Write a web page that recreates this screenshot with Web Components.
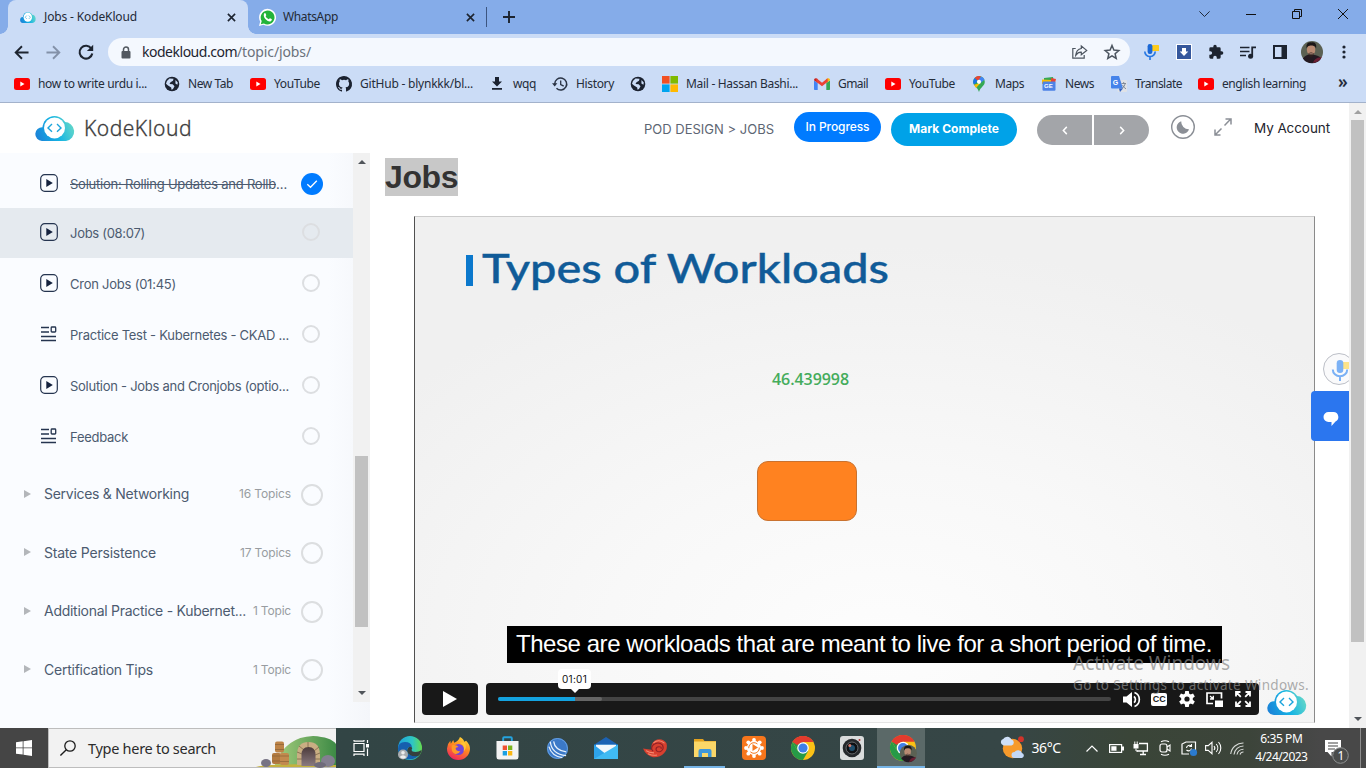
<!DOCTYPE html>
<html lang="en">
<head>
<meta charset="utf-8">
<title>Jobs - KodeKloud</title>
<style>
html,body{margin:0;height:100%;overflow:hidden;background:#fff}
</style>
</head>
<body>
<desk-top></desk-top>
<script>
const define = (name, css, html, after) => customElements.define(name, class extends HTMLElement {
  connectedCallback() {
    if (this.shadowRoot) return;
    const root = this.attachShadow({mode: 'open'});
    root.innerHTML = '<style>*{box-sizing:border-box}' + css + '</style>' + (typeof html === 'function' ? html(this) : html);
    if (after) after(this, root);
  }
});

/* A one-line label that spreads its letters (or its glyph width, with "stretch") over a given width. */
define('ui-label', ':host{display:inline-block;white-space:nowrap;flex:none}span{display:inline-block;white-space:pre;transform-origin:0 50%}',
  '<span><slot></slot></span>', (el, root) => {
    const w = parseFloat(el.getAttribute('w')), s = root.querySelector('span');
    if (!w) return;
    const n = el.textContent.length, nat = s.getBoundingClientRect().width;
    el.style.width = w + 'px';
    if (el.hasAttribute('stretch')) s.style.transform = 'scaleX(' + w / nat + ')';
    else s.style.letterSpacing = (w - nat) / n + 'px';
  });

const chromeWheel = `<circle cx="12" cy="12" r="12" fill="#fbc116"/><path d="M12 12L1.6 6A12 12 0 0 1 22.4 6H12z" fill="#e33b2e"/><path d="M12 12L6.8 15 1.6 6A12 12 0 0 0 12 24l5.2-9z" fill="#269a47"/><path d="M1.6 6L6.8 15 12 6z" fill="#269a47"/><path d="M1.6 6A12 12 0 0 1 22.4 6H12L6 9z" fill="#e33b2e"/><circle cx="12" cy="12" r="5.8" fill="#fff"/><circle cx="12" cy="12" r="4.6" fill="#3f7fe8"/>`;
const face = `<circle cx="12" cy="12" r="12" fill="#5b6153"/><path d="M2 19q4-5 10-4 7 0 10 4a12 12 0 0 1-20 0z" fill="#241a22"/><path d="M13 24q2-6 8-6l2-1a12 12 0 0 1-10 7z" fill="#6b1f33"/><ellipse cx="11" cy="9.5" rx="4.6" ry="6.2" fill="#b98a72"/><path d="M6 8Q5 1 11.500 1.500 17.500 1 16.500 8 15 4 11 5 7.500 4.500 6 8z" fill="#1b1718"/><path d="M8 13.500q3-2 6 0-1 4.500-3 4.500t-3-4.500z" fill="#2b1f1d"/><path d="M9 14h4" stroke="#c79c8a" stroke-width="1"/>`;
const cloud = `<defs><linearGradient id="g" gradientUnits="userSpaceOnUse" x1="2" y1="22" x2="38" y2="7"><stop offset="0" stop-color="#1c83d8"/><stop offset=".5" stop-color="#14b3e4"/><stop offset="1" stop-color="#66d8c8"/></linearGradient></defs><path d="M6.900 25A6.900 6.900 0 0 1 7.500 11.200h1a11.500 11.500 0 0 1 20.800-5.100A9.500 9.500 0 0 1 31 25z" fill="url(#g)"/><circle cx="19.500" cy="11.900" r="12" fill="url(#g)"/><circle cx="19.500" cy="11.900" r="10.500" fill="#fff"/><path d="M17 8l-4 3.900 4 3.900M22 8l4 3.900-4 3.900" fill="none" stroke="#1ba4dc" stroke-width="1.400"/>`;
const ICONS = {
  cloud: ['40 25', cloud],
  youtube: ['16 12', '<rect width="16" height="12" rx="2.500" fill="#f00"/><path d="M6.300 3.500v5L10.500 6z" fill="#fff"/>'],
  whatsapp: ['24 24', '<path d="M0 24l1.700-6.200A12 12 0 1 1 6.300 22.300z" fill="#fff"/><path d="M2.600 21.500l1.200-4.400A9.800 9.800 0 1 1 7 20.300z" fill="#23b33a"/><path d="M7.400 6.200c1-1 1.700-.6 2.100.4l.7 1.700c.3.700-1 1.500-.8 2 .8 1.800 2.300 3.200 4.200 4 .6.200 1.300-1.500 2-1.200l2.200 1.100c1 .5-.2 2.900-1.800 3.300C11.800 18.400 4.400 10.800 7.400 6.200z" fill="#fff"/>'],
  x: ['10 10', '<path d="M1 1l8 8M9 1L1 9" stroke="#1d2430" stroke-width="1.800"/>'],
  plus: ['12 12', '<path d="M6 0v12M0 6h12" stroke="#1d2430" stroke-width="1.900"/>'],
  back: ['16 16', '<path d="M15.500 8H2M8.500 1.300L1.800 8l6.700 6.700" fill="none" stroke="#1d2430" stroke-width="2"/>'],
  fwd: ['16 16', '<path d="M.5 8H14M7.500 1.300L14.200 8l-6.700 6.700" fill="none" stroke="#8391a8" stroke-width="2"/>'],
  reload: ['16 16', '<path d="M13.400 4.700A6.400 6.400 0 1 0 14.300 9.500" fill="none" stroke="#1d2430" stroke-width="2.100"/><path d="M15.200.8v6.300H8.900z" fill="#1d2430"/>'],
  lock: ['10 13', '<path d="M2.500 6V3.600a2.500 2.500 0 0 1 5 0V6" fill="none" stroke="#525860" stroke-width="1.500"/><rect x=".5" y="5" width="9" height="7.500" rx="1" fill="#525860"/>'],
  share: ['16 14', '<path d="M3.700 3.500H.8v9.700h11.400V10" fill="none" stroke="#4c5560" stroke-width="1.200"/><path d="M9.300 1l5.400 4.400-5.400 4.300V7.200Q6 7 3.700 10.300 4.300 4.200 9.300 3.500z" fill="none" stroke="#4c5560" stroke-width="1.200"/>'],
  star: ['16 16', '<path d="M8 1.500l1.900 4.600 4.900.4-3.700 3.200 1.100 4.800L8 11.900l-4.200 2.600 1.100-4.800L1.200 6.500l4.900-.4z" fill="none" stroke="#4c5560" stroke-width="1.500"/>'],
  mic: ['15 16', '<rect x="8" y="1" width="7" height="6" rx=".6" fill="#fdcb1b"/><rect x="3.600" y="0" width="4.800" height="10" rx="2.200" fill="#1a68d6"/><path d="M.8 7.500a5.200 5 0 0 0 10.400 0M6 12.500V16" fill="none" stroke="#2a7ae4" stroke-width="1.700"/>'],
  saver: ['16 16', '<rect width="16" height="16" fill="#fff"/><rect x="1" y="1" width="14" height="14" fill="#35579c"/><path d="M6 4h4v3.500h2.300L8 12 3.700 7.500H6z" fill="#fff"/>'],
  puzzle: ['24 24', '<path d="M20.500 11H19V7a2 2 0 0 0-2-2h-4V3.500a2.500 2.500 0 0 0-5 0V5H4a2 2 0 0 0-2 2v3.800h1.500a2.700 2.700 0 0 1 0 5.400H2V20c0 1.100.9 2 2 2h3.800v-1.500a2.700 2.700 0 0 1 5.400 0V22H17a2 2 0 0 0 2-2v-4h1.500a2.500 2.500 0 0 0 0-5z" fill="#1d2430"/>'],
  queue: ['16 13', '<path d="M0 1.500h9.500M0 5.500h9.500M0 9.500h6" stroke="#1d2430" stroke-width="1.700"/><circle cx="10.600" cy="10.200" r="2.500" fill="#1d2430"/><path d="M12.200 10V1.300H16" fill="none" stroke="#1d2430" stroke-width="1.800"/>'],
  panel: ['14 14', '<path d="M0 0h14v14H0zM2 2v10h6.500V2z" fill="#1d2430" fill-rule="evenodd"/>'],
  face: ['24 24', face],
  dots: ['4 14', '<circle cx="2" cy="2" r="1.600" fill="#1d2430"/><circle cx="2" cy="7" r="1.600" fill="#1d2430"/><circle cx="2" cy="12" r="1.600" fill="#1d2430"/>'],
  globe: ['16 16', '<circle cx="8" cy="8" r="7.300" fill="#1b2230"/><path d="M5.500 2.500l4 .3-.5 2-2.500 1.500-1 1.700 3.200.3 1.800 1.900-1.500 2.800-1.500.8-.3-2.400L4 9.500 2 7.800Q2.500 4.500 5.500 2.500zM11.500 4l2.300 2.500-.4 2.200-2-1.200z" fill="#cbdcf6"/>'],
  github: ['16 16', '<path d="M8 0C3.580 0 0 3.580 0 8c0 3.540 2.290 6.530 5.470 7.590.4.070.55-.17.55-.38v-1.490c-2.010.37-2.530-.49-2.690-.94-.09-.23-.48-.94-.82-1.130-.28-.15-.68-.52-.01-.53.63-.01 1.080.58 1.230.82.72 1.210 1.870.87 2.330.66.070-.52.28-.87.51-1.070-1.780-.2-3.640-.89-3.640-3.950 0-.87.31-1.590.82-2.150-.08-.2-.36-1.020.08-2.120 0 0 .67-.21 2.200.82a7.600 7.600 0 0 1 4 0c1.530-1.040 2.200-.82 2.200-.82.44 1.100.16 1.920.08 2.120.51.56.82 1.270.82 2.150 0 3.070-1.870 3.750-3.650 3.950.29.25.54.73.54 1.480v2.200c0 .21.15.46.55.38A8 8 0 0 0 8 0z" fill="#1b2230"/>'],
  down: ['12 13', '<path d="M4 0h4v4.500h3L6 9.500 1 4.500h3zM1 11h10v1.800H1z" fill="#1b2230"/>'],
  history: ['16 14', '<path d="M2.700 7a6 6 0 1 1 1.800 4.300" fill="none" stroke="#2a3344" stroke-width="1.500"/><path d="M0 6.300h5.400L2.700 9.400z" fill="#2a3344"/><path d="M8.700 3.500v4l3 1.600" fill="none" stroke="#2a3344" stroke-width="1.300"/>'],
  ms: ['16 16', '<path d="M0 0h7.600v7.600H0z" fill="#f25022"/><path d="M8.400 0H16v7.600H8.400z" fill="#7fba00"/><path d="M0 8.400h7.600V16H0z" fill="#00a4ef"/><path d="M8.400 8.400H16V16H8.400z" fill="#ffb900"/>'],
  gmail: ['16 12', '<path d="M0 2.500v8.500c0 .6.400 1 1 1h2.700V5z" fill="#4285f4"/><path d="M16 2.500v8.500c0 .6-.4 1-1 1h-2.700V5z" fill="#34a853"/><path d="M12.300 5V1L14 .2C15 0 16 .8 16 2.200z" fill="#fbbc04"/><path d="M3.700 5V1L2 .2C1 0 0 .8 0 2.200z" fill="#c5221f"/><path d="M2.500.3L8 4.700 13.500.3l.3 3.500L8 8.300 2.200 3.800z" fill="#ea4335"/>'],
  maps: ['12 16', '<path d="M6 0a5.800 5.800 0 0 1 5.800 5.800C11.800 10 7.500 11 6 16 4.500 11 .2 10 .2 5.800A5.800 5.800 0 0 1 6 0z" fill="#34a853"/><path d="M6 5.800L1.600 2A5.800 5.800 0 0 1 8 .4z" fill="#ea4335"/><path d="M1.600 2L5 5 1 8.700A6 6 0 0 1 1.600 2z" fill="#1a73e8"/><path d="M8 .4a5.800 5.800 0 0 1 3.500 3.300L7.500 7 5 5z" fill="#4285f4"/><path d="M1 8.700L7.500 7 3 12z" fill="#fbbc04"/><circle cx="6" cy="5.800" r="2.100" fill="#fff"/>'],
  news: ['16 14', '<path d="M3 1l9-1 1 5H3z" fill="#34a853"/><path d="M10 1l5 1-1 4h-4z" fill="#ea4335"/><path d="M1 2.500l9 .5v4H1z" fill="#fbbc04"/><rect x="1.500" y="4.500" width="13" height="9.300" rx="1" fill="#4f83e6"/><text x="3" y="11.400" font-family="Liberation Sans" font-size="6" font-weight="700" fill="#fff">GE</text>'],
  translate: ['16 16', '<rect x="6.500" y="4" width="9.500" height="12" rx="1" fill="#dfe2e7"/><path d="M0 1q0-1 1-1h7l4 12.500H1q-1 0-1-1z" fill="#4583ea"/><path d="M8 12.500h4L9 16z" fill="#2f5fc0"/><text x="1.800" y="8.800" font-family="Liberation Sans" font-size="7" font-weight="700" fill="#fff">G</text><path d="M10.500 7.500h4.500M12.700 6v1.500M14.300 7.500q-1 4-3.500 5M11.500 9q1.500 3 3.500 3.800" fill="none" stroke="#7b8492" stroke-width=".9"/>'],
  moon: ['24 24', '<circle cx="12" cy="12" r="11.300" fill="none" stroke="#8b8f96" stroke-width="1.400"/><path d="M10.200 6.300A6.300 6.300 0 1 0 18 14.200 7.500 7.500 0 0 1 10.200 6.300z" fill="#8b8f96"/>'],
  expand: ['18 18', '<path d="M10.500 7.500L16.500 1.300M7.500 10.500L1.300 16.700M11.500 1H17v5.500M1 11.500V17h5.500" fill="none" stroke="#8b8f96" stroke-width="1.500"/>'],
  lt: ['6 8', '<path d="M4.800.8L1.400 4l3.400 3.200" fill="none" stroke="#fff" stroke-width="1.500"/>'],
  gt: ['6 8', '<path d="M1.200.8L4.600 4 1.200 7.200" fill="none" stroke="#fff" stroke-width="1.500"/>'],
  video: ['18 18', '<rect x=".7" y=".7" width="16.600" height="16.600" rx="4" fill="none" stroke="#25344f" stroke-width="1.200"/><path d="M6.300 5l6.500 4-6.500 4z" fill="#14213d"/>'],
  text: ['16 16', '<path d="M0 1.500h8M0 6h8M0 10.500h15M0 14.500h15" stroke="#25344f" stroke-width="1.300"/><rect x="10.200" y="1" width="4.500" height="5" rx=".8" fill="none" stroke="#25344f" stroke-width="1.300"/>'],
  tri: ['7 8', '<path d="M0 0l7 4-7 4z" fill="#b3b6ba"/>'],
  check: ['22 22', '<circle cx="11" cy="11" r="11" fill="#007bff"/><path d="M6.300 11.300l3.200 3 6.300-6.600" fill="none" stroke="#fff" stroke-width="1.300"/>'],
  up: ['8 4', '<path d="M0 4h8L4 0z" fill="#50555a"/>'], upl: ['8 4', '<path d="M0 4h8L4 0z" fill="#a0a0a0"/>'],
  dn: ['8 4', '<path d="M0 0h8L4 4z" fill="#50555a"/>'],
  play: ['14 16', '<path d="M0 0l14 8-14 8z" fill="#fff"/>'],
  vol: ['17 17', '<path d="M0 5.500h3.500L9 1v15l-5.500-4.500H0z" fill="#fff"/><path d="M11 5.300a4.300 4.300 0 0 1 0 6.400M11.500 1.500a7.500 7.500 0 0 1 0 14" fill="none" stroke="#fff" stroke-width="1.700"/>'],
  gear: ['16 16', '<g fill="#fff"><circle cx="8" cy="8" r="5.800"/><path d="M6.200 0h3.600l.6 4H5.600zM6.200 16h3.600l.6-4H5.600z"/><path transform="rotate(60 8 8)" d="M6.200 0h3.600l.6 4H5.600zM6.200 16h3.600l.6-4H5.600z"/><path transform="rotate(120 8 8)" d="M6.200 0h3.600l.6 4H5.600zM6.200 16h3.600l.6-4H5.600z"/></g><circle cx="8" cy="8" r="2.600" fill="#181818"/>'],
  pip: ['17 15', '<path d="M7 11.500H1V1h14.500v5.500" fill="none" stroke="#fff" stroke-width="1.700"/><rect x="9" y="8.500" width="8" height="6.500" fill="#fff"/><path d="M4 4l3 2.700M7.300 3.700V7H4" fill="none" stroke="#fff" stroke-width="1.300"/>'],
  full: ['16 16', '<path d="M1 5.500V1h4.500M1 1l4.800 4.800M10.500 1H15v4.500M15 1l-4.800 4.800M1 10.500V15h4.500M1 15l4.800-4.800M10.500 15H15v-4.500M15 15l-4.800-4.800" fill="none" stroke="#fff" stroke-width="1.800"/>'],
  micbig: ['32 32', '<circle cx="16" cy="16" r="15.500" fill="#fafafb" stroke="#b9bcc4"/><rect x="20" y="9" width="9" height="7" fill="#fde283"/><rect x="13.700" y="7" width="6.600" height="13" rx="3.300" fill="#74adf5"/><path d="M9.800 16.500a7.200 6.800 0 0 0 14.400 0M17 23.300V28" fill="none" stroke="#74adf5" stroke-width="2"/>'],
  chat: ['16 14', '<path d="M5.500 0h5a5 5 0 0 1 2 9.500L8.500 14V10h-3a5 5 0 0 1 0-10z" fill="#fff"/>'],
  winmin: ['10 10', '<path d="M0 5.500h10" stroke="#111"/>'],
  winmax: ['10 10', '<path d="M.5 2.500h7v7h-7zM2.500 2.500v-2h7v7h-2" fill="none" stroke="#111"/>'],
  winx: ['10 10', '<path d="M0 0l10 10M10 0L0 10" stroke="#111"/>'],
  chev: ['11 6', '<path d="M.4.400l5.100 5.100L10.600.4" fill="none" stroke="#222b3a"/>'],
  win: ['16 16', '<path d="M0 2.300L6.700 1.300V7.500H0zM7.500 1.200L16 0v7.500H7.500zM0 8.300h6.700v6.300L0 13.700zM7.500 8.300H16V16l-8.500-1.200z" fill="#fff"/>'],
  search: ['16 16', '<circle cx="10" cy="6" r="5.200" fill="none" stroke="#1c1c1c" stroke-width="1.300"/><path d="M6.300 9.800L.4 15.600" stroke="#1c1c1c" stroke-width="1.400"/>'],
  scene: ['80 32', '<defs><linearGradient id="h" x1="0" x2="1"><stop offset="0" stop-color="#a8cf7e"/><stop offset="1" stop-color="#3d8a45"/></linearGradient><linearGradient id="d" x1="0" y1="0" x2="0" y2="1"><stop offset="0" stop-color="#4b3a3a"/><stop offset="1" stop-color="#8a7a80"/></linearGradient></defs><path d="M18 32Q28 2 57 1 75 2 80 9V32z" fill="url(#h)"/><path d="M0 32q15-4 80-2v2z" fill="#c4b13e"/><path d="M41 30V20Q41 7 52.500 7T64 20v10z" fill="#c9ae83"/><path d="M41 17l5 2M43 11l5 4M52 7v5M63 12l-5 4M64 18l-5 2M41 24h5M59 24h5" stroke="#7c6448" stroke-width=".8"/><path d="M45.500 31V20q0-8 7-8t7 8v11z" fill="url(#d)"/><rect x="19" y="6.500" width="9" height="11" rx="2" fill="#bd8347"/><rect x="16" y="18" width="9" height="11" rx="2" fill="#b37a40"/><rect x="24" y="18" width="9" height="12" rx="2" fill="#c28a4e"/><path d="M19 9.500h9M19 14.500h9M16 21h8M24 21h9M16 26h8M24 26.500h9" stroke="#8a6238" stroke-width=".7"/><ellipse cx="10" cy="28" rx="5" ry="4" fill="#777384"/><ellipse cx="72" cy="26" rx="7" ry="6" fill="#837f90"/><ellipse cx="64" cy="30" rx="6" ry="3" fill="#6f6b7b"/>'],
  task: ['16 16', '<path d="M1 3.500h10v8H1zM1 1.500V0M11 1.500V0M1 1.200h10M1 14.200h10M1 13.500V16M11 13.500V16" fill="none" stroke="#fff" stroke-width="1.200"/><path d="M14.500 0v3M14.500 8.500V16" stroke="#fff" stroke-width="1.200"/><path d="M13 4h3v3.500h-3z" fill="#fff"/>'],
  edge: ['24 24', '<defs><linearGradient id="e" x1="0" y1=".3" x2="1" y2=".3"><stop offset="0" stop-color="#1ea3dd"/><stop offset=".6" stop-color="#2ec6c4"/><stop offset="1" stop-color="#64dc4f"/></linearGradient></defs><circle cx="12" cy="12" r="12" fill="url(#e)"/><path d="M0 13Q0 6 7 6q6 0 7 5-4-1-5 3-1 7 12 5a12 12 0 0 1-21-6z" fill="#165fae"/><path d="M10 12q2-2 4-.5.600 1-.4 2.300 0 2.200 4 2.200 3 0 6-2-1 5-3.500 6-9 1-10.800-4-.7-2 .7-4z" fill="#35403f"/><circle cx="5" cy="18.500" r="5" fill="#a9adb0"/><circle cx="5" cy="16.800" r="1.800" fill="#eee"/><path d="M1.700 21q3.300-3.500 6.600 0-3 3.500-6.600 0z" fill="#eee"/>'],
  firefox: ['24 24', '<defs><linearGradient id="f" x1=".8" y1="0" x2=".3" y2="1"><stop offset="0" stop-color="#ffe03b"/><stop offset=".45" stop-color="#ff8a1f"/><stop offset="1" stop-color="#f0245f"/></linearGradient></defs><path d="M12 24A11.700 11.700 0 0 1 0 12Q.3 7 3.500 4l.5 3 2.500-4 1 3Q12 4.500 13.500 0q4 2 4.500 5l2-1q4 4 4 8.500A12 12 0 0 1 12 24z" fill="url(#f)"/><circle cx="12" cy="13" r="5.800" fill="#7145d8"/><path d="M5 8.500q5-1 7 2-3 0-3 2 1 3 5 2-2 4-6 3-4-2-3-9z" fill="#ff9a25"/><path d="M13 6q6 2 4.500 9 4-4 1-9.500z" fill="#ffc634"/>'],
  store: ['24 24', '<path d="M7.500 6V2.200q0-1 1-1h7q1 0 1 1V6" fill="none" stroke="#25a3de" stroke-width="2"/><path d="M0.500 5h23v16q0 2.500-2.500 2.500H3q-2.500 0-2.500-2.500z" fill="#f3f3f3"/><path d="M7 9.500h4.500V14H7z" fill="#ef5130"/><path d="M12.500 9.500H17V14h-4.500z" fill="#7ab41d"/><path d="M7 15h4.500v4.500H7z" fill="#1aa0e3"/><path d="M12.500 15H17v4.500h-4.500z" fill="#fbb713"/>'],
  swirl: ['24 24', '<circle cx="12" cy="12" r="11" fill="#3b79c8"/><circle cx="12" cy="12" r="10.400" fill="none" stroke="#6aa4e5"/><path d="M4.500 5q1.500 13 16.500 14.500M8 4.500Q9 13.500 21 15.500M3 10q3 10 14 11.500" fill="none" stroke="#e8f2fc" stroke-width="1.300"/>'],
  mail: ['24 24', '<path d="M0 8L12 0l12 8v2H0z" fill="#1c62b3"/><path d="M0 8h24v15H0z" fill="#1e90dd"/><path d="M2 8h20v5l-10 5L2 13z" fill="#f2f7fb"/><path d="M0 8l12 10 12-10v15H0z" fill="#2ea3ea"/><path d="M24 8L0 23h24z" fill="#40baf3"/>'],
  shell: ['24 24', '<path d="M0 12q5 1 9 1.500-2-6 2.500-10.500Q19-1 23.500 6q1.500 7-2.500 11.500-4 5-11 4.500-7-2-10-10z" fill="#d8402f"/><path d="M10 15q-3-3.500.5-7.500 5-4 9 .500 2 5-2 7.500-4 1-4.500-2.500 0-3 3-3t2 2.500" fill="none" stroke="#8f1f25" stroke-width="1.100"/><path d="M10.500 5.500Q16 .5 21.500 6M3 14.500q3 2.500 8 2.500M5 18q5 2.500 9 1.500" fill="none" stroke="#f58b72" stroke-width="1.200"/>'],
  folder: ['22 20', '<path d="M0 1h9l1.500 2H22v4H0z" fill="#e4a21e"/><path d="M0 3.500h22V19H0z" fill="#fbd768"/><path d="M4.500 19v-6q0-2 2-2h9q2 0 2 2v6H14v-4H8v4z" fill="#3f97d9"/>'],
  sun: ['24 24', '<rect width="24" height="24" rx="4" fill="#f7761c"/><g fill="#fff"><circle cx="12" cy="12" r="7.200"/><circle cx="12" cy="4" r="1.900"/><circle cx="12" cy="20" r="1.900"/><circle cx="4" cy="12" r="1.900"/><circle cx="20" cy="12" r="1.900"/><circle cx="6.300" cy="6.300" r="1.900"/><circle cx="17.700" cy="6.300" r="1.900"/><circle cx="6.300" cy="17.700" r="1.900"/><circle cx="17.700" cy="17.700" r="1.900"/></g><path d="M10.500 8l5.500 3.500-5.500 3.500z" fill="#f47a22"/><circle cx="12" cy="12" r="5.300" fill="none" stroke="#f47a22" stroke-dasharray="12 4"/>'],
  chrome: ['24 24', chromeWheel],
  chromeme: ['24 24', chromeWheel + '<g transform="translate(9 9) scale(.66)">' + face + '</g>'],
  camera: ['24 24', '<rect width="24" height="24" rx="3" fill="#dadcdc"/><circle cx="12" cy="12" r="9.300" fill="#25282b"/><circle cx="12" cy="12" r="6" fill="#0e1013" stroke="#67696c"/><circle cx="12" cy="12" r="3" fill="#1f4d6b"/><circle cx="9.800" cy="9.600" r="1.500" fill="#d77b6d"/><circle cx="19.500" cy="4" r="1" fill="#b03030"/>'],
  weather: ['24 24', '<circle cx="12.500" cy="12.500" r="9.700" fill="#f79a2b"/><path d="M3.500 9.500a3.500 3.500 0 0 1 0-6.800 4.700 4.700 0 0 1 8 .8 3.100 3.100 0 0 1 0 6z" fill="#cfe0f8"/><path d="M14.500 22a3 3 0 0 1 0-6 4.300 4.300 0 0 1 7.500 1 2.600 2.600 0 0 1 0 5z" fill="#c3d8f7"/><circle cx="21" cy="3.200" r="2.900" fill="#d1342a"/>'],
  tup: ['12 7', '<path d="M.5 6.500L6 1l5.500 5.500" fill="none" stroke="#fff" stroke-width="1.200"/>'],
  batt: ['15 9', '<rect x=".6" y=".6" width="12" height="7.800" fill="none" stroke="#fff" stroke-width="1.200"/><path d="M13 2.500h2v4h-2zM2.300 2.300h5.200v4.400H2.300z" fill="#fff"/>'],
  net: ['16 15', '<path d="M6 2.500h8.400v7.500H4M7 13.500h6M10.200 10v3.500" fill="none" stroke="#fff" stroke-width="1.300"/><rect x=".5" y="3" width="5" height="4.500" fill="#fff"/><path d="M1.800 3V.5M4.200 3V.5M3 7.500V10h2" stroke="#fff" stroke-width="1" fill="none"/>'],
  meet: ['12 16', '<rect x="1" y="4" width="7" height="8" rx="2" fill="none" stroke="#fff" stroke-width="1.200"/><path d="M8 7l3-2v6L8 9M2 1.700Q6-.3 10 1.700M2 14.300Q6 16.300 10 14.300" fill="none" stroke="#fff" stroke-width="1.100"/>'],
  cast: ['16 16', '<path d="M1 13V4l4-2h9.500v10M1 4v10h7" fill="none" stroke="#fff" stroke-width="1.200"/><path d="M5.500 8a3 3 0 0 1 5-2M10.500 8.500a3 3 0 0 1-5 1.500M10.500 4v2.500H8.300" fill="none" stroke="#fff" stroke-width="1.100"/><circle cx="12.500" cy="12.500" r="3.600" fill="#2b7bd0"/>'],
  spk: ['17 14', '<path d="M.6 4.600h2.600L7 1.300v11.400L3.200 9.400H.6z" fill="none" stroke="#fff" stroke-width="1.100"/><path d="M9 5a3 3 0 0 1 0 4M11.200 3a6 6 0 0 1 0 8M13.500 1a9 9 0 0 1 0 12" fill="none" stroke="#fff" stroke-width="1.100"/>'],
  wifi: ['14 14', '<path d="M.7 13A12.500 12.500 0 0 1 13.500 2M4 13.500A9.500 9.500 0 0 1 13.500 5M7 13.500a6.500 6.500 0 0 1 6.500-5.300M10 13.500a3.500 3.500 0 0 1 3.500-2.500" fill="none" stroke="#d9dcd9" stroke-width="1.100"/>'],
  note: ['24 25', '<path d="M0 1h16v12H6.500v4.500L2.500 13H0z" fill="#fff"/><path d="M3 4h10M3 7h10M3 10h7" stroke="#444" stroke-width="1.200"/><circle cx="15.500" cy="16.500" r="7.800" fill="#4a4c4c" stroke="#8f9191"/><text x="12.600" y="21" font-family="Noto Sans" font-size="12" fill="#fff">1</text>']
};
define('ui-icon', ':host{display:inline-block;flex:none;line-height:0}svg{display:block;width:100%;height:100%;overflow:visible}', el => {
  const [box, art] = ICONS[el.getAttribute('name')];
  const [bw, bh] = box.split(' ');
  el.style.width = (el.getAttribute('w') || bw) + 'px';
  el.style.height = (el.getAttribute('h') || bh) + 'px';
  return `<svg viewBox="0 0 ${box}" preserveAspectRatio="none">${art}</svg>`;
});

define('scroll-bar', ':host{display:flex;flex-direction:column;align-items:center;width:17px;flex:none;background:#f1f1f1}.b{height:17px;display:flex;align-items:center}.t{width:13px;background:#c1c1c1}.f{flex:1}',
  el => `<div class="b"><ui-icon name="${el.getAttribute('top') || 'up'}"></ui-icon></div><div style="height:${el.getAttribute('before')}px"></div><div class="t" style="height:${el.getAttribute('thumb')}px"></div><div class="f"></div><div class="b"><ui-icon name="dn" style="margin-bottom:2px"></ui-icon></div>`);

/* Browser frame */
define('tab-strip', `:host{display:flex;height:34px;background:#85ace9;font:12px/16px "Noto Sans",sans-serif;color:#232a36;align-items:stretch}
.tab{display:flex;align-items:center;position:relative}
.on{background:#cbdcf6;border-radius:8px 8px 0 0;width:240px;margin-left:8px;padding-left:12px}
.on:before,.on:after{content:"";position:absolute;bottom:0;width:8px;height:8px}
.on:before{left:-8px;background:radial-gradient(circle at 0 0,transparent 7.500px,#cbdcf6 8px)}
.on:after{right:-8px;background:radial-gradient(circle at 100% 0,transparent 7.500px,#cbdcf6 8px)}
.sep{width:1px;height:20px;background:#3c5580;margin:7px 0 0 10px}
.win{margin-left:auto;display:flex;align-items:center;padding:0 18px 6px 0;gap:36px}`,
`<div class="tab on"><ui-icon name="cloud" w="16" h="11"></ui-icon><ui-label w="93" style="margin-left:8px">Jobs - KodeKloud</ui-label><ui-icon name="x" w="9" h="9" style="margin-left:90px"></ui-icon></div>
<div class="tab"><ui-icon name="whatsapp" w="17" h="17" style="margin-left:11px"></ui-icon><ui-label w="55" style="margin-left:7px">WhatsApp</ui-label><ui-icon name="x" w="9" h="9" style="margin-left:128px"></ui-icon></div>
<div class="sep" style="margin-left:11px"></div><ui-icon name="plus" style="margin:11px 0 0 16px"></ui-icon>
<div class="win"><ui-icon name="chev"></ui-icon><ui-icon name="winmin"></ui-icon><ui-icon name="winmax"></ui-icon><ui-icon name="winx"></ui-icon></div>`);

define('tool-bar', `:host{display:flex;align-items:center;height:36px;background:#cbdcf6;padding:0 0 0 14px;font:14px/20px "Noto Sans",sans-serif}
.box{display:flex;align-items:center;width:1022px;height:28px;border-radius:14px;background:#f4f8fe;margin-left:14px;padding:0 10px 0 13px;color:#6a717b}
.h{color:#1d2430}`,
`<ui-icon name="back" w="15" h="15"></ui-icon><ui-icon name="fwd" w="15" h="15" style="margin-left:17px"></ui-icon><ui-icon name="reload" style="margin-left:17px"></ui-icon>
<div class="box"><ui-icon name="lock"></ui-icon><ui-label class="h" w="95" style="margin-left:11px">kodekloud.com</ui-label><ui-label w="74">/topic/jobs/</ui-label><ui-icon name="share" style="margin-left:auto"></ui-icon><ui-icon name="star" style="margin-left:16px"></ui-icon></div>
<ui-icon name="mic" style="margin-left:14px"></ui-icon><ui-icon name="saver" style="margin-left:17px"></ui-icon><ui-icon name="puzzle" w="16" h="16" style="margin-left:16px"></ui-icon><ui-icon name="queue" style="margin-left:16px"></ui-icon><ui-icon name="panel" style="margin-left:17px"></ui-icon><ui-icon name="face" w="22" h="22" style="margin-left:14px"></ui-icon><ui-icon name="dots" style="margin-left:19px"></ui-icon>`);

define('book-mark', ':host{display:flex;align-items:center;flex:none}.i{width:16px;display:flex;justify-content:center;margin-right:8px}', el =>
  `<div class="i"><ui-icon name="${el.getAttribute('icon')}"></ui-icon></div><slot></slot>`);
const marks = [
  [14, 'youtube', 'how to write urdu i...', 109], [164, 'globe', 'New Tab', 45], [250, 'youtube', 'YouTube', 46], [336, 'github', 'GitHub - blynkkk/bl...', 113],
  [489, 'down', 'wqq', 23], [552, 'history', 'History', 38], [630, 'globe', '', 0], [662, 'ms', 'Mail - Hassan Bashi...', 112], [814, 'gmail', 'Gmail', 30],
  [885, 'youtube', 'YouTube', 46], [971, 'maps', 'Maps', 29], [1041, 'news', 'News', 29], [1111, 'translate', 'Translate', 47], [1198, 'youtube', 'english learning', 84], [1314, '', '»', 10]];
define('bookmark-bar', ':host{display:flex;align-items:center;height:33px;background:#cbdcf6;border-bottom:1px solid #a3b2cb;padding-bottom:5px;font:12px/18px "Noto Sans",sans-serif;color:#252d3a}.more{font-size:17px;line-height:18px;font-weight:600;padding-bottom:4px}', () => {
  let x = 0;
  return marks.map(([at, icon, text, w]) => {
    const gap = at - x; x = at + 24 + w;
    if (!icon) return `<ui-label class="more" w="10" style="margin-left:${gap + 24}px">${text}</ui-label>`;
    return `<book-mark icon="${icon}" style="margin-left:${gap}px">${text ? `<ui-label w="${w}">${text}</ui-label>` : ''}</book-mark>`;
  }).join('');
});

/* Course page */
define('page-header', `:host{display:flex;height:50px;background:#fff;font:13px/20px Inter,sans-serif;padding-left:35px;align-items:flex-start}
.pill{border-radius:17px;color:#fff;display:flex;align-items:center;justify-content:center}
.a{width:87px;height:30px;margin:9px 0 0 20px;background:#007bff;font-weight:500;font-size:12px}
.b{width:126px;height:33px;margin:10px 0 0 10px;background:#00a2e8;font-weight:700;font-size:12px;padding-bottom:1px}
.nav{display:flex;gap:2px;margin:12px 0 0 20px}.nav div{width:55px;height:30px;background:#a3a5a9;display:flex;align-items:center;justify-content:center;border-radius:15px 0 0 15px}.nav div+div{border-radius:0 15px 15px 0}
.logo{font:21px/28px "Noto Sans",sans-serif;font-weight:300;color:#3c3c3c;-webkit-text-stroke:.3px #3c3c3c;margin:11px 0 0 9px}
.c{color:#5d6673;margin:16px 0 0 452px;font-weight:400}.me{color:#1e242e;margin:15px 0 0 22px;font-size:13.500px}`,
`<ui-icon name="cloud" style="margin-top:12.500px"></ui-icon><ui-label class="logo" w="108">KodeKloud</ui-label>
<ui-label class="c" w="130">POD DESIGN &gt; JOBS</ui-label>
<div class="pill a"><ui-label w="64">In Progress</ui-label></div><div class="pill b"><ui-label w="90">Mark Complete</ui-label></div>
<div class="nav"><div><ui-icon name="lt" w="6" h="9"></ui-icon></div><div><ui-icon name="gt" w="6" h="9"></ui-icon></div></div>
<ui-icon name="moon" style="margin:12px 0 0 22px"></ui-icon><ui-icon name="expand" style="margin:15px 0 0 19px"></ui-icon><ui-label class="me" w="76">My Account</ui-label>`);

define('topic-row', `:host{display:flex;align-items:center;height:51px;padding-left:40px;font:13px/20px Inter,sans-serif;color:#4c5b70}
:host([on]){height:50px;background:#e5eaef}
.i{width:18px;display:flex;margin-right:12px;justify-content:center;padding-bottom:2px}.t{width:232px}.o{width:18px;height:18px;border:2px solid #dcdee1;border-radius:50%;margin:0 0 2px}
:host([done]) .t{width:231px}:host([done]){height:49px}`,
el => `<div class="i"><ui-icon name="${el.getAttribute('icon')}"></ui-icon></div><div class="t"><slot></slot></div>${el.hasAttribute('done') ? '<ui-icon name="check"></ui-icon>' : '<div class="o"></div>'}`);
define('section-row', `:host{display:flex;align-items:center;height:58.500px;padding-left:24px;font:14px/20px Inter,sans-serif;color:#4c5b70}
.n{margin-left:13px;flex:1}.o{width:22px;height:22px;border:2px solid #dcdee0;border-radius:50%;margin:1px 30px 0 10px}.k{font-size:12px;color:#989ca1}`,
el => `<ui-icon name="tri" style="margin-top:-1px"></ui-icon><div class="n"><slot></slot></div><ui-label class="k" w="${el.getAttribute('cw')}">${el.getAttribute('count')}</ui-label><div class="o"></div>`);
define('side-bar', `:host{display:flex;width:370px;height:575px;background:linear-gradient(90deg,#fafcff 328px,#f4f6fa 370px);flex:none}
.l{width:353px;padding-top:6px}scroll-bar{height:549px}
.g{padding-top:3px}`,
`<div class="l">
<topic-row icon="video" done><ui-label w="206"><s>Solution: Rolling Updates and Rollb</s></ui-label>...</topic-row>
<topic-row icon="video" on><ui-label w="75">Jobs (08:07)</ui-label></topic-row>
<topic-row icon="video"><ui-label w="106">Cron Jobs (01:45)</ui-label></topic-row>
<topic-row icon="text"><ui-label w="219">Practice Test - Kubernetes - CKAD ...</ui-label></topic-row>
<topic-row icon="video"><ui-label w="219">Solution - Jobs and Cronjobs (optio...</ui-label></topic-row>
<topic-row icon="text"><ui-label w="58">Feedback</ui-label></topic-row>
<div class="g"><section-row count="16 Topics" cw="52"><ui-label w="145">Services &amp; Networking</ui-label></section-row>
<section-row count="17 Topics" cw="51"><ui-label w="112">State Persistence</ui-label></section-row>
<section-row count="1 Topic" cw="38"><ui-label w="202">Additional Practice - Kubernet...</ui-label></section-row>
<section-row count="1 Topic" cw="38"><ui-label w="109">Certification Tips</ui-label></section-row></div>
</div><scroll-bar before="286" thumb="171"></scroll-bar>`);

define('player-bar', `:host{display:flex;gap:8px;height:32px;font-family:Inter,sans-serif}
.p,.m{background:#181818;border-radius:4px;display:flex;align-items:center}.p{width:56px;justify-content:center}.m{width:773px;padding:0 8px 0 12px;justify-content:space-between}
.tr{width:613px;height:4px;border-radius:2px;background:#444;display:flex;position:relative;overflow:visible}
.tr i{width:77px;background:#14a3e0;border-radius:2px 0 0 2px}.tr b{width:27px;background:#666;border-radius:0 2px 2px 0}
.tip{position:absolute;left:60px;top:-28px;width:33px;height:20px;border-radius:4px;background:#fff;color:#111;font-size:10px;line-height:20px;text-align:center}
.tip:after{content:"";position:absolute;left:13px;top:20px;border:4px solid transparent;border-top-color:#fff;border-bottom:0}
.cc{width:16px;height:13px;background:#fff;border-radius:2px;font:700 9px/13px "Liberation Sans";text-align:center;color:#181818}
.lg{margin-top:7px}`,
`<div class="p"><ui-icon name="play"></ui-icon></div>
<div class="m"><div class="tr"><i></i><b></b><div class="tip"><ui-label w="25">01:01</ui-label></div></div>
<ui-icon name="vol"></ui-icon><div class="cc">CC</div><ui-icon name="gear"></ui-icon><ui-icon name="pip"></ui-icon><ui-icon name="full"></ui-icon></div>
<ui-icon class="lg" name="cloud"></ui-icon>`);

define('video-slide', `:host{display:flex;flex-direction:column;width:901px;height:507px;border:1px solid #8a8a8a;border-top-color:#ccc;border-left-color:#505050;border-bottom-color:#e4e4e4;background:radial-gradient(ellipse 620px 400px at 52% 85%,#fdfdfd 0,#f8f8f8 45%,#f0f0f0 100%);padding-left:7px}
.h{display:flex;margin:29px 0 0 44px;height:60px}.h i{width:7px;height:31px;background:#0b78cc;margin:9px 9px 0 0}
.h ui-label{font:500 40px/50px Lato,sans-serif;margin-top:-3px;color:#105b98;-webkit-text-stroke:.4px #105b98}
.n{font:600 16px/22px "Open Sans",sans-serif;color:#45ac5c;margin:62px 0 0 350px}
.o{width:100px;height:60px;border-radius:11px;background:#ff8220;border:1.500px solid #c9722f;margin:71px 0 0 335px}
.c{width:715px;height:37px;background:#000;color:#fff;font:24px/36px "Liberation Sans",sans-serif;padding-left:9px;margin:105px 0 20px 85px}`,
`<div class="h"><i></i><ui-label w="407" stretch>Types of Workloads</ui-label></div><ui-label class="n" w="77">46.439998</ui-label><div class="o"></div>
<div class="c"><ui-label w="696">These are workloads that are meant to live for a short period of time.</ui-label></div><player-bar></player-bar>`);

define('lesson-view', `:host{display:block;flex:1;position:relative;background:#fff;overflow:hidden}
.t{display:block;width:73px;height:38px;margin:5px 0 0 15px;background:#c8c8c8;color:#333;font:700 32px/38px "Liberation Sans",sans-serif}
video-slide{margin:20px 0 0 44px}
.mic{position:absolute;left:953px;top:200px;opacity:.95}
.chat{position:absolute;left:941px;top:238px;width:38px;height:50px;background:#2b76ef;border-radius:4px 0 0 4px;display:flex;align-items:center;justify-content:center;padding-top:5px;padding-left:2px}`,
`<ui-label class="t" w="73">Jobs</ui-label><video-slide></video-slide><ui-icon class="mic" name="micbig"></ui-icon><div class="chat"><ui-icon name="chat"></ui-icon></div>`);

define('course-page', ':host{display:flex;height:625px}.m{flex:1;min-width:0}.b{display:flex;height:575px}',
`<div class="m"><page-header></page-header><div class="b"><side-bar></side-bar><lesson-view></lesson-view></div></div><scroll-bar top="upl" before="0" thumb="522"></scroll-bar>`);

/* Windows taskbar */
define('task-bar', `:host{display:flex;height:40px;background:linear-gradient(90deg,#324545 336px,#364646 1000px,#3a4538 1130px,#3c443a 1250px,#484848 1320px);color:#fff;font:12px/18px "Noto Sans",sans-serif}
.st{width:48px;background:#454545;display:flex;align-items:center;justify-content:center}
.se{width:288px;background:#f2f2f2;border:1px solid #bdbdbd;border-right:0;display:flex;align-items:center;color:#2c2c2c;font-size:14.500px;padding-left:11px}
.se ui-icon:last-child{align-self:flex-end;margin-left:auto}
.c{width:49.150px;display:flex;align-items:center;justify-content:center}.run{box-shadow:inset 0 -2px #76b4e6;width:41.150px;margin:0 4px}.on{background:#5b6968;width:48px;box-shadow:inset 0 -2px #76b4e6;padding-left:4px}
.w{display:flex;align-items:center;margin-left:75px;gap:8px;width:80.500px;font-size:14px}.y{width:24.200px;display:flex;align-items:center;justify-content:center}
.k{margin-left:4px;width:56px;display:flex;flex-direction:column;align-items:center;justify-content:center}
.n{margin:11px 0 0 16px}.e{width:1px;background:#8d8d8d;margin-left:11px}`,
() => `<div class="st"><ui-icon name="win"></ui-icon></div><div class="se"><ui-icon name="search"></ui-icon><ui-label w="128" style="margin-left:12px">Type here to search</ui-label><ui-icon name="scene"></ui-icon></div>` +
['task 16 16', 'edge 24 24', 'firefox 23 23', 'store 23 24', 'swirl 23 23', 'mail 24 23', 'shell 24 21', 'folder 22 20', 'sun 24 24', 'chrome 24 24', 'camera 24 24', 'chromeme 26 26'].map(s => {
  const [n, w, h] = s.split(' ');
  return `<div class="c${n === 'folder' ? ' run' : n === 'chromeme' ? ' on' : ''}"><ui-icon name="${n}" w="${w}" h="${h}"></ui-icon></div>`;
}).join('') +
`<div class="w"><ui-icon name="weather"></ui-icon><ui-label w="29">36°C</ui-label></div>` +
['tup', 'batt', 'net', 'meet', 'cast', 'spk', 'wifi'].map(n => `<div class="y"><ui-icon name="${n}"></ui-icon></div>`).join('') +
`<div class="k"><ui-label w="42">6:35 PM</ui-label><ui-label w="52">4/24/2023</ui-label></div><ui-icon class="n" name="note"></ui-icon><div class="e"></div>`);

define('os-watermark', ':host{display:flex;flex-direction:column;font-family:"Noto Sans",sans-serif;color:rgba(140,140,140,.72);pointer-events:none}.a{font-size:19px;line-height:26px}.b{font-size:13.500px;line-height:19px}',
`<ui-label class="a" w="157">Activate Windows</ui-label><ui-label class="b" w="236">Go to Settings to activate Windows.</ui-label>`);
define('desk-top', ':host{display:block;position:relative;width:1366px;height:768px;overflow:hidden}os-watermark{position:absolute;left:1073px;top:650px}',
`<tab-strip></tab-strip><tool-bar></tool-bar><bookmark-bar></bookmark-bar><course-page></course-page><task-bar></task-bar><os-watermark></os-watermark>`);
</script>
</body>
</html>
